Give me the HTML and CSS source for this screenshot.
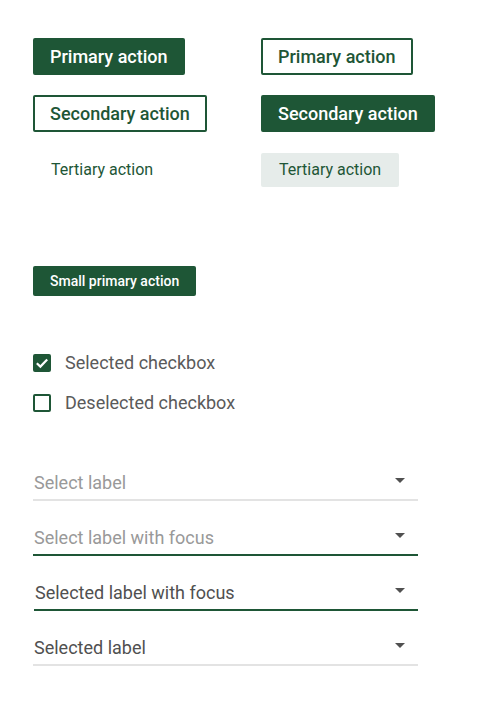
FILE: index.html
```html
<!DOCTYPE html>
<html>
<head>
<meta charset="utf-8">
<link rel="stylesheet" href="styles.css">
</head>
<body>
<main class="page">
  <section class="buttons">
    <div class="cell"><button class="btn btn-filled">Primary action</button></div>
    <div class="cell"><button class="btn btn-outline">Primary action</button></div>
    <div class="cell"><button class="btn btn-outline">Secondary action</button></div>
    <div class="cell"><button class="btn btn-filled">Secondary action</button></div>
    <div class="cell"><button class="btn btn-text">Tertiary action</button></div>
    <div class="cell"><button class="btn btn-text btn-tinted">Tertiary action</button></div>
  </section>

  <section class="small-row">
    <button class="btn-small">Small primary action</button>
  </section>

  <section class="checks">
    <label class="check">
      <span class="box box-on">
        <svg viewBox="0 0 18 18" width="18" height="18"><path d="M3.8 9.2 L7.4 12.6 L14.2 5.6" fill="none" stroke="#fff" stroke-width="2.2"/></svg>
      </span>
      <span class="check-text">Selected checkbox</span>
    </label>
    <label class="check">
      <span class="box"></span>
      <span class="check-text">Deselected checkbox</span>
    </label>
  </section>

  <section class="selects">
    <div class="select">
      <span class="select-text placeholder">Select label</span>
      <span class="caret"></span>
    </div>
    <div class="select focus">
      <span class="select-text placeholder">Select label with focus</span>
      <span class="caret"></span>
    </div>
    <div class="select focus shifted">
      <span class="select-text">Selected label with focus</span>
      <span class="caret"></span>
    </div>
    <div class="select">
      <span class="select-text">Selected label</span>
      <span class="caret"></span>
    </div>
  </section>
</main>
</body>
</html>
```

FILE: styles.css
```css
* { box-sizing: border-box; }
html, body { margin: 0; padding: 0; background: #fff; }
body { font-family: Roboto, "Liberation Sans", sans-serif; }

.page { padding: 38px 0 0 33px; }

.buttons {
  display: grid;
  grid-template-columns: 228px auto;
  row-gap: 20px;
  align-items: start;
}
.cell { display: flex; }

.btn {
  font-family: Roboto, "Liberation Sans", sans-serif;
  font-size: 18px;
  font-weight: 500;
  line-height: 21px;
  padding: 6px 15px;
  border: 2px solid #1e5636;
  border-radius: 2px;
  cursor: pointer;
  margin: 0;
}
.btn-filled { background: #1e5636; color: #fff; }
.btn-outline { background: #fff; color: #1e5636; }
.btn-text {
  font-size: 16px;
  font-weight: 400;
  line-height: 20px;
  padding: 7px 18px;
  border: none;
  background: transparent;
  color: #1e5636;
}
.btn-tinted { background: #e6ecea; }
.cell:nth-child(5), .cell:nth-child(6) { margin-top: 1px; }

.small-row { margin-top: 79px; display: flex; }
.btn-small {
  font-family: Roboto, "Liberation Sans", sans-serif;
  font-size: 14px;
  font-weight: 500;
  line-height: 16px;
  padding: 7px 17px;
  background: #1e5636;
  color: #fff;
  border: none;
  border-radius: 2px;
  margin: 0;
}

.checks {
  margin-top: 56px;
  display: flex;
  flex-direction: column;
  gap: 18px;
}
.check {
  display: flex;
  align-items: center;
  gap: 14px;
  height: 22px;
}
.box {
  width: 18px;
  height: 18px;
  border: 2px solid #1e5636;
  border-radius: 2px;
  display: flex;
  align-items: center;
  justify-content: center;
  flex: none;
}
.box-on { background: #1e5636; }
.box-on svg { margin: -2px; flex: none; }
.check-text {
  font-size: 18px;
  color: #5a5a5a;
  line-height: 22px;
}

.selects {
  margin-top: 51px;
  display: flex;
  flex-direction: column;
  gap: 19px;
  width: 385px;
}
.select {
  display: flex;
  align-items: center;
  justify-content: space-between;
  height: 36px;
  padding: 0 13px 0 1px;
  border-bottom: 2px solid #e3e3e3;
}
.select.focus { border-bottom-color: #1e5636; }
.select.shifted { margin-left: 1px; }
.select-text {
  font-size: 18px;
  color: #505050;
  line-height: 22px;
  margin-top: 1px;
}
.select-text.placeholder { color: #999; }
.caret {
  width: 0;
  height: 0;
  border-left: 5px solid transparent;
  border-right: 5px solid transparent;
  border-top: 5px solid #505050;
  margin-top: -3px;
}
```
